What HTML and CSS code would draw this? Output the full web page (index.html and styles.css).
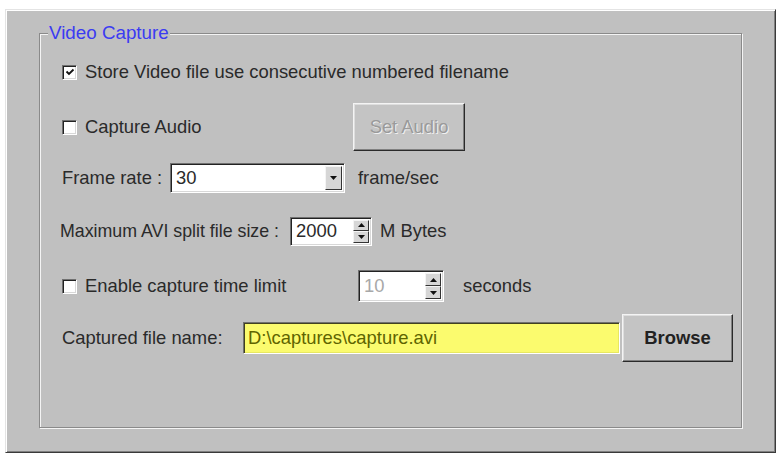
FILE: index.html
```html
<!DOCTYPE html>
<html>
<head>
<meta charset="utf-8">
<title>Video Capture</title>
<link rel="stylesheet" href="styles.css">
</head>
<body>
<div class="panel">
  <div class="group">
    <span class="legend">Video Capture</span>
    <div class="rows">
      <div class="row">
        <span class="check checked"><svg viewBox="0 0 10 10" width="10" height="10"><path d="M1.5 4.5 L4 7 L8.5 2.5" fill="none" stroke="#111" stroke-width="1.8"/></svg></span>
        <span class="txt">Store Video file use consecutive numbered filename</span>
      </div>
      <div class="row">
        <div class="lead w-audio"><span class="check"></span><span class="txt">Capture Audio</span></div>
        <button class="btn btn-set" disabled>Set Audio</button>
      </div>
      <div class="row">
        <div class="lead w-frame"><span class="txt">Frame rate :</span></div>
        <div class="field combo"><span class="val">30</span><span class="drop"><svg viewBox="0 0 7 4" width="7" height="4"><path d="M0 0 H7 L3.5 4 Z" fill="#111"/></svg></span></div>
        <span class="txt after">frame/sec</span>
      </div>
      <div class="row">
        <div class="lead w-avi"><span class="txt">Maximum AVI split file size :</span></div>
        <div class="field spin spin-avi"><span class="val">2000</span><span class="arrows"><span class="arr"><svg viewBox="0 0 7 4" width="7" height="4"><path d="M0 4 H7 L3.5 0 Z" fill="#111"/></svg></span><span class="arr"><svg viewBox="0 0 7 4" width="7" height="4"><path d="M0 0 H7 L3.5 4 Z" fill="#111"/></svg></span></span></div>
        <span class="txt after-avi">M Bytes</span>
      </div>
      <div class="row">
        <div class="lead w-limit"><span class="check"></span><span class="txt">Enable capture time limit</span></div>
        <div class="field spin spin-limit"><span class="val dis">10</span><span class="arrows"><span class="arr"><svg viewBox="0 0 7 4" width="7" height="4"><path d="M0 4 H7 L3.5 0 Z" fill="#111"/></svg></span><span class="arr"><svg viewBox="0 0 7 4" width="7" height="4"><path d="M0 0 H7 L3.5 4 Z" fill="#111"/></svg></span></span></div>
        <span class="txt after-sec">seconds</span>
      </div>
      <div class="row">
        <div class="lead w-file"><span class="txt">Captured file name:</span></div>
        <div class="field file"><span class="val">D:\captures\capture.avi</span></div>
        <button class="btn btn-browse">Browse</button>
      </div>
    </div>
  </div>
</div>
</body>
</html>
```

FILE: styles.css
```css
html, body {
  margin: 0;
  padding: 0;
  background: #ffffff;
}
body {
  width: 784px;
  height: 456px;
  overflow: hidden;
  font-family: "Liberation Sans", Arial, sans-serif;
  font-size: 18.4px;
  color: #2a2a2a;
}
.panel {
  box-sizing: border-box;
  margin: 9px 0 0 5px;
  width: 771px;
  height: 444px;
  background: #c0c0c0;
  border: 1px solid;
  border-color: #e4e4e4 #3a3a3a #3a3a3a #e4e4e4;
  box-shadow: inset 1px 1px 0 #ffffff, inset -1px -1px 0 #808080;
  padding: 23px 0 0 33px;
}
.group {
  position: relative;
  box-sizing: border-box;
  width: 703px;
  height: 395px;
  border: 1px solid #8a8a8a;
  box-shadow: inset 1px 1px 0 #f4f4f4, 1px 1px 0 #f4f4f4;
  padding: 12px 0 0 22px;
}
.legend {
  position: absolute;
  left: 8px;
  top: -12px;
  background: #c0c0c0;
  color: #3b3bf2;
  font-size: 18.8px;
  padding: 0 1px;
  line-height: 22px;
}
.rows {
  display: grid;
  grid-template-rows: 52px 58px 44px 62px 48px 56px;
}
.row {
  display: flex;
  align-items: center;
}
.lead {
  display: flex;
  align-items: center;
  flex: none;
}
.w-audio { width: 291px; }
.w-frame { width: 108px; }
.w-avi { width: 230px; margin-left: -2px; }
.w-avi .txt { font-size: 17.8px; }
.w-limit { width: 296px; }
.w-file { width: 181px; }
.txt {
  white-space: nowrap;
  line-height: 22px;
}
.check {
  flex: none;
  box-sizing: border-box;
  width: 15px;
  height: 15px;
  margin-right: 8px;
  background: #fff;
  border: 1px solid;
  border-color: #707070 #fff #fff #707070;
  box-shadow: inset 1px 1px 0 #222, inset -1px -1px 0 #d8d8d8;
  display: flex;
  align-items: center;
  justify-content: center;
}
.field {
  box-sizing: border-box;
  flex: none;
  display: flex;
  align-items: center;
  background: #fff;
  border: 1px solid;
  border-color: #707070 #fff #fff #707070;
  box-shadow: inset 1px 1px 0 #222, inset -1px -1px 0 #d8d8d8;
  padding: 2px;
}
.val {
  flex: 1;
  padding-left: 3px;
  white-space: nowrap;
  line-height: 22px;
}
.val.dis { color: #a8a8a8; }
.combo {
  width: 175px;
  height: 30px;
}
.drop {
  flex: none;
  box-sizing: border-box;
  width: 17px;
  height: 100%;
  background: #d6d6d6;
  border: 1px solid;
  border-color: #f4f4f4 #333 #333 #f4f4f4;
  display: flex;
  align-items: center;
  justify-content: center;
}
.after { margin-left: 13px; }
.spin-avi {
  width: 82px;
  height: 29px;
}
.spin-limit {
  width: 86px;
  height: 32px;
}
.arrows {
  flex: none;
  width: 16px;
  height: 100%;
  display: flex;
  flex-direction: column;
}
.arr {
  flex: 1;
  box-sizing: border-box;
  background: #d6d6d6;
  border: 1px solid;
  border-color: #f4f4f4 #333 #333 #f4f4f4;
  display: flex;
  align-items: center;
  justify-content: center;
}
.after-avi { margin-left: 8px; }
.after-sec { margin-left: 19px; }
.file {
  width: 377px;
  height: 32px;
  background: #fbfb6e;
  box-shadow: inset 1px 1px 0 #404020, inset -1px -1px 0 #e8e860;
}
.file .val {
  color: #5e6400;
  padding-left: 2px;
}
.btn {
  box-sizing: border-box;
  flex: none;
  font: inherit;
  background: #c4c4c4;
  border: 1px solid;
  border-color: #f4f4f4 #2a2a2a #2a2a2a #f4f4f4;
  box-shadow: inset -1px -1px 0 #808080, inset 1px 1px 0 #dedede;
  padding: 0;
  color: #222;
}
.btn-set {
  width: 112px;
  height: 48px;
  color: #9a9a9a;
  text-shadow: 1px 1px 0 #f0f0f0;
}
.btn-browse {
  margin-left: 2px;
  width: 111px;
  height: 48px;
  font-weight: bold;
}
```
